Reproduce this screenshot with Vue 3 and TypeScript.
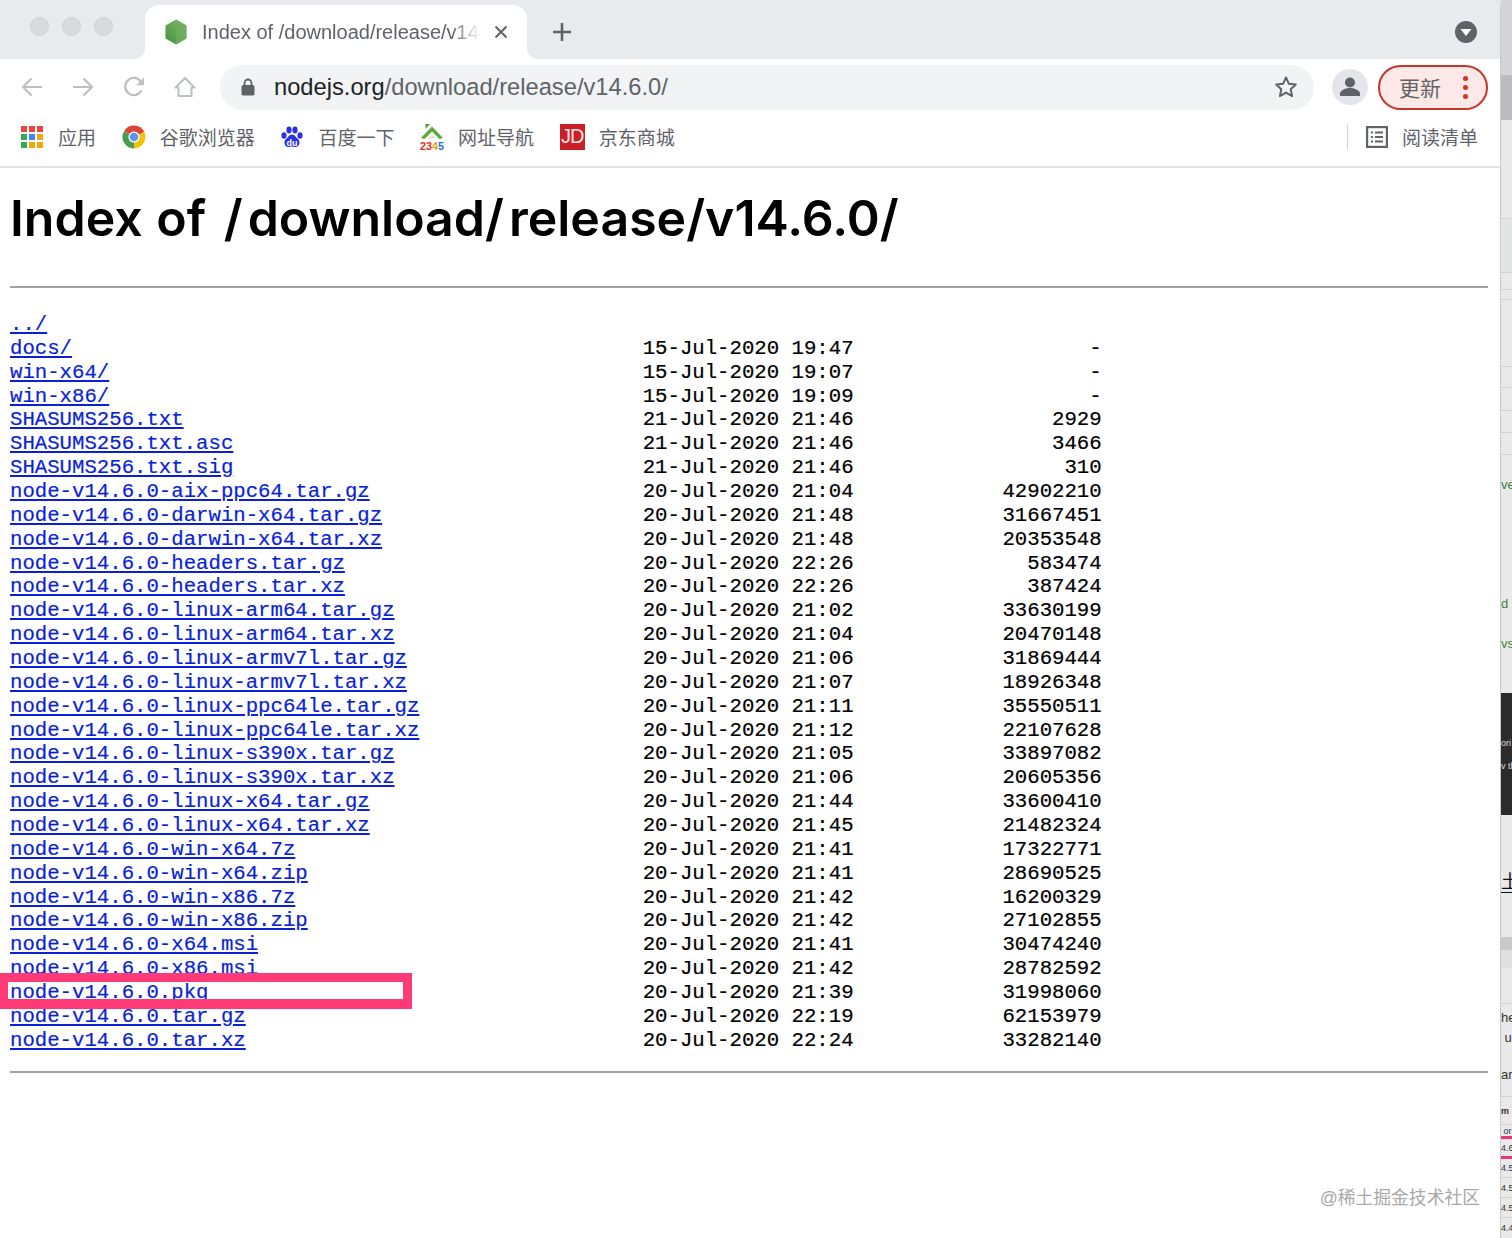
<script setup lang="ts">
type Entry = { name: string; date?: string; size?: string }

const entries: Entry[] = [
  { name: '../' },
  { name: 'docs/', date: '15-Jul-2020 19:47', size: '-' },
  { name: 'win-x64/', date: '15-Jul-2020 19:07', size: '-' },
  { name: 'win-x86/', date: '15-Jul-2020 19:09', size: '-' },
  { name: 'SHASUMS256.txt', date: '21-Jul-2020 21:46', size: '2929' },
  { name: 'SHASUMS256.txt.asc', date: '21-Jul-2020 21:46', size: '3466' },
  { name: 'SHASUMS256.txt.sig', date: '21-Jul-2020 21:46', size: '310' },
  { name: 'node-v14.6.0-aix-ppc64.tar.gz', date: '20-Jul-2020 21:04', size: '42902210' },
  { name: 'node-v14.6.0-darwin-x64.tar.gz', date: '20-Jul-2020 21:48', size: '31667451' },
  { name: 'node-v14.6.0-darwin-x64.tar.xz', date: '20-Jul-2020 21:48', size: '20353548' },
  { name: 'node-v14.6.0-headers.tar.gz', date: '20-Jul-2020 22:26', size: '583474' },
  { name: 'node-v14.6.0-headers.tar.xz', date: '20-Jul-2020 22:26', size: '387424' },
  { name: 'node-v14.6.0-linux-arm64.tar.gz', date: '20-Jul-2020 21:02', size: '33630199' },
  { name: 'node-v14.6.0-linux-arm64.tar.xz', date: '20-Jul-2020 21:04', size: '20470148' },
  { name: 'node-v14.6.0-linux-armv7l.tar.gz', date: '20-Jul-2020 21:06', size: '31869444' },
  { name: 'node-v14.6.0-linux-armv7l.tar.xz', date: '20-Jul-2020 21:07', size: '18926348' },
  { name: 'node-v14.6.0-linux-ppc64le.tar.gz', date: '20-Jul-2020 21:11', size: '35550511' },
  { name: 'node-v14.6.0-linux-ppc64le.tar.xz', date: '20-Jul-2020 21:12', size: '22107628' },
  { name: 'node-v14.6.0-linux-s390x.tar.gz', date: '20-Jul-2020 21:05', size: '33897082' },
  { name: 'node-v14.6.0-linux-s390x.tar.xz', date: '20-Jul-2020 21:06', size: '20605356' },
  { name: 'node-v14.6.0-linux-x64.tar.gz', date: '20-Jul-2020 21:44', size: '33600410' },
  { name: 'node-v14.6.0-linux-x64.tar.xz', date: '20-Jul-2020 21:45', size: '21482324' },
  { name: 'node-v14.6.0-win-x64.7z', date: '20-Jul-2020 21:41', size: '17322771' },
  { name: 'node-v14.6.0-win-x64.zip', date: '20-Jul-2020 21:41', size: '28690525' },
  { name: 'node-v14.6.0-win-x86.7z', date: '20-Jul-2020 21:42', size: '16200329' },
  { name: 'node-v14.6.0-win-x86.zip', date: '20-Jul-2020 21:42', size: '27102855' },
  { name: 'node-v14.6.0-x64.msi', date: '20-Jul-2020 21:41', size: '30474240' },
  { name: 'node-v14.6.0-x86.msi', date: '20-Jul-2020 21:42', size: '28782592' },
  { name: 'node-v14.6.0.pkg', date: '20-Jul-2020 21:39', size: '31998060' },
  { name: 'node-v14.6.0.tar.gz', date: '20-Jul-2020 22:19', size: '62153979' },
  { name: 'node-v14.6.0.tar.xz', date: '20-Jul-2020 22:24', size: '33282140' },
]

// nginx autoindex columns: name padded to 51, date, size right aligned in 20
const rest = (e: Entry) =>
  e.date ? ' '.repeat(51 - e.name.length) + e.date + (e.size ?? '').padStart(20) : ''

// slice of the window behind this one, top to bottom
const strip: { h: number; cls: string; text?: string }[] = [
  { h: 75, cls: 's-chrome' },
  { h: 45, cls: 's-chrome2' },
  { h: 99, cls: 's-plain s-line' },
  { h: 54, cls: 's-plain s-shade s-line' },
  { h: 17, cls: 's-plain s-line' },
  { h: 10, cls: 's-plain s-line' },
  { h: 67, cls: 's-plain s-line' },
  { h: 21, cls: 's-plain s-line' },
  { h: 23, cls: 's-plain s-line' },
  { h: 22, cls: 's-plain s-line' },
  { h: 22, cls: 's-plain s-line' },
  { h: 16, cls: 's-plain' },
  { h: 26, cls: 's-plain s-green', text: 've' },
  { h: 93, cls: 's-plain' },
  { h: 26, cls: 's-plain s-green', text: 'd p' },
  { h: 14, cls: 's-plain' },
  { h: 26, cls: 's-plain s-green', text: 'vs' },
  { h: 37, cls: 's-plain' },
  { h: 38, cls: 's-dark' },
  { h: 24, cls: 's-dark s-tiny', text: 'ori' },
  { h: 22, cls: 's-dark s-tiny', text: 'v th' },
  { h: 38, cls: 's-dark' },
  { h: 52, cls: 's-plain' },
  { h: 26, cls: 's-plain s-black', text: '土' },
  { h: 44, cls: 's-plain' },
  { h: 13, cls: 's-grey' },
  { h: 18, cls: 's-light' },
  { h: 36, cls: 's-plain s-line' },
  { h: 26, cls: 's-plain s-body', text: 'he' },
  { h: 14, cls: 's-plain s-body', text: ' u' },
  { h: 18, cls: 's-plain' },
  { h: 24, cls: 's-plain s-body', text: 'ar' },
  { h: 11, cls: 's-plain s-line' },
  { h: 28, cls: 's-plain s-tiny s-bold s-line', text: 'm' },
  { h: 11, cls: 's-plain s-tiny', text: ' or' },
  { h: 3, cls: 's-pink' },
  { h: 17, cls: 's-plain s-tiny', text: '4.6' },
  { h: 3, cls: 's-pink' },
  { h: 19, cls: 's-plain s-tiny s-line', text: '4.5' },
  { h: 20, cls: 's-plain s-tiny s-line', text: '4.5' },
  { h: 20, cls: 's-plain s-tiny s-line', text: '4.5' },
  { h: 20, cls: 's-plain s-tiny', text: '4.4' },
]
</script>

<template>
  <div class="screen">
    <div class="window">
      <div class="tabstrip">
        <div class="lights"><i></i><i></i><i></i></div>
        <div class="tab">
          <svg class="favicon" width="24" height="28" viewBox="0 0 24 28">
            <defs>
              <linearGradient id="nodeg" x1="0" y1="1" x2="1" y2="0">
                <stop offset="0" stop-color="#3f8f3c" />
                <stop offset="1" stop-color="#86bd6c" />
              </linearGradient>
            </defs>
            <path d="M12 1.500 22.500 7.600v12.800L12 26.500 1.500 20.400V7.600z" fill="url(#nodeg)" />
            <path d="M12 1.500 22.500 7.600v12.800L12 26.500z" fill="#6fae5c" opacity=".6" />
          </svg>
          <span class="tab-title">Index of /download/release/v14.6.0/</span>
          <svg class="tab-close" width="14" height="14" viewBox="0 0 14 14">
            <path d="M1.500 1.500l11 11M12.500 1.500l-11 11" stroke="#5f6368" stroke-width="2" fill="none" />
          </svg>
        </div>
        <svg class="new-tab" width="20" height="20" viewBox="0 0 20 20">
          <path d="M10 1v18M1 10h18" stroke="#5f6368" stroke-width="2.600" fill="none" />
        </svg>
        <svg class="tab-search" width="22" height="22" viewBox="0 0 22 22">
          <circle cx="11" cy="11" r="11" fill="#5f6368" />
          <path d="M5.500 8h11L11 15z" fill="#fff" />
        </svg>
      </div>

      <div class="toolbar">
        <div class="nav">
          <svg width="24" height="24" viewBox="0 0 24 24">
            <path d="M22 12H3M11.500 3.500 3 12l8.500 8.500" stroke="#bdbfc2" stroke-width="2.200" fill="none" />
          </svg>
          <svg width="24" height="24" viewBox="0 0 24 24">
            <path d="M2 12h19M12.500 3.500 21 12l-8.500 8.500" stroke="#bdbfc2" stroke-width="2.200" fill="none" />
          </svg>
          <svg width="24" height="24" viewBox="0 0 24 24">
            <path d="M19.500 15.500A8.600 8.600 0 1 1 18.600 6.200" stroke="#bdbfc2" stroke-width="2.200" fill="none" />
            <path d="M22 2.500v7.800h-7.800z" fill="#bdbfc2" />
          </svg>
          <svg width="24" height="24" viewBox="0 0 24 24">
            <path d="M12 3 2.500 12.500h3V21h13v-8.500h3z" stroke="#bdbfc2" stroke-width="2" fill="none" stroke-linejoin="round" />
          </svg>
        </div>
        <div class="omnibox">
          <svg class="lock" width="14" height="18" viewBox="0 0 14 18">
            <path d="M3.500 8V5a3.500 3.500 0 0 1 7 0v3" stroke="#5f6368" stroke-width="1.800" fill="none" />
            <rect x="0.500" y="7" width="13" height="10.500" rx="1.800" fill="#5f6368" />
          </svg>
          <span class="url"><b>nodejs.org</b>/download/release/v14.6.0/</span>
          <svg class="star" width="24" height="24" viewBox="0 0 24 24">
            <path d="M12 2.500l2.900 6.300 6.900.8-5.100 4.700 1.400 6.800-6.100-3.400-6.100 3.400 1.400-6.800-5.100-4.700 6.900-.8z" stroke="#5f6368" stroke-width="2" fill="none" stroke-linejoin="round" />
          </svg>
        </div>
        <div class="avatar">
          <svg width="36" height="36" viewBox="0 0 36 36">
            <circle cx="18" cy="13.500" r="5" fill="#5f6368" />
            <path d="M8 27v-2.500c0-3.500 6.500-5.500 10-5.500s10 2 10 5.500V27z" fill="#5f6368" />
          </svg>
        </div>
        <div class="update">
          <span>更新</span>
          <div class="dots"><i></i><i></i><i></i></div>
        </div>
      </div>

      <div class="bookmarks">
        <div class="bm">
          <div class="apps">
            <i class="r"></i><i class="r"></i><i class="r"></i>
            <i class="g"></i><i class="b"></i><i class="y"></i>
            <i class="g"></i><i class="y"></i><i class="y"></i>
          </div>
          <span>应用</span>
        </div>
        <div class="bm">
          <svg width="24" height="24" viewBox="0 0 24 24">
            <path d="M12 12 2.200 6A11.500 11.500 0 0 1 22.300 7z" fill="#db4437" />
            <path d="M12 12 22.300 7A11.500 11.500 0 0 1 12 23.500z" fill="#f4c20d" />
            <path d="M12 12v11.500A11.500 11.500 0 0 1 2.200 6z" fill="#4a9d50" />
            <circle cx="12" cy="12" r="5.600" fill="#fff" />
            <circle cx="12" cy="12" r="4.300" fill="#5a95ea" />
          </svg>
          <span>谷歌浏览器</span>
        </div>
        <div class="bm">
          <svg width="24" height="24" viewBox="0 0 24 24">
            <g fill="#2932e1">
              <ellipse cx="4" cy="10.500" rx="2.600" ry="3.200" />
              <ellipse cx="9" cy="5" rx="2.600" ry="3.400" />
              <ellipse cx="15" cy="5" rx="2.600" ry="3.400" />
              <ellipse cx="20" cy="10.500" rx="2.600" ry="3.200" />
              <path d="M12 9.500c3 0 4 3 6 4.500 2.500 2 2 8-2.500 8-1.500 0-2.300-.6-3.500-.6s-2 .6-3.500.6C4 22 3.500 16 6 14c2-1.500 3-4.500 6-4.500z" />
            </g>
            <text x="12" y="20.500" class="du">du</text>
          </svg>
          <span>百度一下</span>
        </div>
        <div class="bm">
          <svg class="ic2345" width="24" height="28" viewBox="0 0 24 28">
            <path d="M1 15 12 3.500 23 15l-3.500 1L12 8.500 4.500 16z" fill="#5fa83c" />
            <path d="M5.500 1h4.500L5.500 6z" fill="#4f9a30" />
            <path d="M8 15.500 12 11.500l4 4z" fill="#d6ead0" />
            <text x="12" y="26.500" class="n2345" textLength="24" lengthAdjust="spacingAndGlyphs"><tspan fill="#d92d20">23</tspan><tspan fill="#e89a10">4</tspan><tspan fill="#1d74c9">5</tspan></text>
          </svg>
          <span>网址导航</span>
        </div>
        <div class="bm">
          <div class="jd">JD</div>
          <span>京东商城</span>
        </div>
        <div class="reading">
          <div class="sep"></div>
          <svg width="22" height="22" viewBox="0 0 22 22">
            <rect x="1.100" y="1.100" width="19.800" height="19.800" fill="none" stroke="#5f6368" stroke-width="2.200" />
            <path d="M5 6.500h2M9 6.500h8M5 11h2M9 11h8M5 15.500h2M9 15.500h8" stroke="#5f6368" stroke-width="2" fill="none" />
          </svg>
          <span>阅读清单</span>
        </div>
      </div>

      <div class="page">
        <h1>Index of <span class="slash-first">/</span>download<span class="slash-mid">/</span>release/v14.6.0/</h1>
        <hr />
        <div class="listing">
          <div v-for="e in entries" :key="e.name" class="row"><a href="#">{{ e.name }}</a>{{ rest(e) }}</div>
        </div>
        <hr />
      </div>

      <div class="highlight"></div>
      <div class="watermark">@稀土掘金技术社区</div>
    </div>

    <div class="behind">
      <div
        v-for="(s, i) in strip"
        :key="i"
        :class="['seg', s.cls]"
        :style="{ height: s.h + 'px' }"
      >{{ s.text }}</div>
    </div>
  </div>
</template>

<style scoped>
.screen {
  display: flex;
  width: 1512px;
  height: 1238px;
  overflow: hidden;
  background: #e9e9e9;
}

.window {
  position: relative;
  width: 1501px;
  flex-shrink: 0;
  background: #fff;
  border-right: 1px solid #c9c9cb;
  box-sizing: border-box;
  border-top-right-radius: 8px;
  overflow: hidden;
  font-family: "Liberation Sans", "Noto Sans CJK SC", sans-serif;
}

/* tab strip */
.tabstrip {
  display: flex;
  align-items: flex-end;
  height: 59px;
  background: #e8eaed;
  position: relative;
}

.lights {
  display: flex;
  gap: 13px;
  align-self: flex-start;
  margin: 17px 0 0 30px;
}

.lights i {
  display: block;
  width: 19px;
  height: 19px;
  border-radius: 50%;
  background: #d9dadc;
  border: 1px solid #cfd0d2;
  box-sizing: border-box;
}

.tab {
  position: relative;
  display: flex;
  align-items: center;
  width: 382px;
  height: 54px;
  margin-left: 32px;
  padding-left: 19px;
  box-sizing: border-box;
  background: #fff;
  border-radius: 14px 14px 0 0;
}

.tab::before,
.tab::after {
  content: "";
  position: absolute;
  bottom: 0;
  width: 12px;
  height: 12px;
}

.tab::before {
  left: -12px;
  background: radial-gradient(circle at 0 0, #e8eaed 12px, #fff 12.500px);
}

.tab::after {
  right: -12px;
  background: radial-gradient(circle at 100% 0, #e8eaed 12px, #fff 12.500px);
}

.favicon {
  flex-shrink: 0;
}

.tab-title {
  margin-left: 14px;
  width: 278px;
  overflow: hidden;
  white-space: nowrap;
  font-size: 20px;
  color: #5f6368;
  -webkit-mask-image: linear-gradient(to right, #000 250px, transparent 278px);
  mask-image: linear-gradient(to right, #000 250px, transparent 278px);
}

.tab-close {
  margin-left: 14px;
}

.new-tab {
  margin: 0 0 17px 25px;
}

.tab-search {
  margin: 0 23px 16px auto;
}

/* toolbar */
.toolbar {
  display: flex;
  align-items: center;
  height: 56px;
}

.nav {
  display: flex;
  gap: 27px;
  width: 220px;
  padding-left: 20px;
  box-sizing: border-box;
}

.omnibox {
  display: flex;
  align-items: center;
  width: 1094px;
  height: 45px;
  border-radius: 23px;
  background: #f1f3f4;
  box-sizing: border-box;
  padding: 0 16px 0 21px;
}

.url {
  margin-left: 19px;
  font-size: 23.700px;
  color: #5f6368;
  white-space: nowrap;
}

.url b {
  font-weight: 400;
  color: #202124;
}

.star {
  margin-left: auto;
}

.avatar {
  width: 36px;
  height: 36px;
  margin-left: 18px;
  border-radius: 50%;
  background: #e3e5ea;
}

.avatar svg {
  display: block;
}

.update {
  display: flex;
  align-items: center;
  width: 110px;
  height: 45px;
  margin-left: 10px;
  padding-left: 19px;
  box-sizing: border-box;
  border: 2px solid #c5372c;
  border-radius: 23px;
  background: #fce8e6;
  font-size: 21px;
  color: #5f6368;
}

.dots {
  display: flex;
  flex-direction: column;
  gap: 4px;
  margin-left: 22px;
}

.dots i {
  display: block;
  width: 5px;
  height: 5px;
  border-radius: 50%;
  background: #d93025;
}

/* bookmarks bar */
.bookmarks {
  display: flex;
  align-items: center;
  gap: 25.700px;
  height: 53px;
  padding: 0 22px 8px 20px;
  box-sizing: border-box;
  border-bottom: 2px solid #e2e2e3;
  font-size: 19px;
  color: #5f6368;
}

.bm {
  display: flex;
  align-items: center;
  gap: 14px;
}

.ic2345 {
  margin: -2px 0;
}

.apps {
  display: grid;
  grid-template-columns: repeat(3, 6px);
  grid-auto-rows: 6px;
  gap: 2px;
  width: 24px;
  padding-left: 1px;
  box-sizing: border-box;
}

.apps i {
  display: block;
}

.apps .r { background: #e8453c; }
.apps .g { background: #34a853; }
.apps .b { background: #4285f4; }
.apps .y { background: #f4a60d; }

.du {
  font-family: "Liberation Sans", sans-serif;
  font-size: 9px;
  font-weight: 700;
  fill: #fff;
  text-anchor: middle;
}

.n2345 {
  font-family: "Liberation Sans", sans-serif;
  font-size: 10px;
  font-weight: 700;
  text-anchor: middle;
}

.jd {
  display: flex;
  align-items: center;
  justify-content: center;
  width: 25px;
  height: 26px;
  background: #cb2027;
  color: #f6e4e4;
  font-size: 20px;
  letter-spacing: -1px;
}

.reading {
  display: flex;
  align-items: center;
  margin-left: auto;
}

.sep {
  width: 1px;
  height: 25px;
  background: #cfd1d4;
  margin-right: 18px;
}

.reading span {
  margin-left: 14px;
}

/* page */
.page {
  padding: 0 12px 0 10px;
}

h1 {
  margin: 0;
  padding-top: 20px;
  font-family: Inter, "Liberation Sans", sans-serif;
  font-size: 50px;
  line-height: 60px;
  font-weight: 600;
  color: #000;
  white-space: nowrap;
  word-spacing: 1px;
}

/* slashes sit wider in the original face */
.slash-first {
  margin: 0 5px 0 4px;
}

.slash-mid {
  margin-right: 5px;
}

hr {
  margin: 0;
  height: 2px;
  border: 0;
  background: #a3a3a3;
}

.page h1 + hr {
  margin-top: 38px;
}

.listing {
  padding: 25px 0 18px;
  font-family: "Liberation Mono", monospace;
  font-size: 20.680px;
  line-height: 23.860px;
  color: #000;
  -webkit-text-stroke: 0.2px;
}

.row {
  white-space: pre;
  height: 23.860px;
}

.row a {
  color: #0a1fd8;
}

/* markup on top of the screenshot */
.highlight {
  position: absolute;
  left: -2px;
  top: 973px;
  width: 414px;
  height: 36px;
  box-sizing: border-box;
  border: solid #ff3b77;
  border-width: 9px 9px 10px 10px;
}

.watermark {
  position: absolute;
  right: 20px;
  top: 1183px;
  font-size: 17.800px;
  color: #a8a8a8;
  white-space: nowrap;
}

/* window behind */
.behind {
  width: 11px;
  flex-shrink: 0;
  overflow: hidden;
  font-family: "Liberation Sans", sans-serif;
}

.seg {
  box-sizing: border-box;
  overflow: hidden;
  white-space: pre;
  font-size: 13px;
  display: flex;
  align-items: center;
}

.s-chrome { background: #d5d4d8; }
.s-chrome2 { background: #bcbbc0; }
.s-plain { background: #e9e9e9; color: #333; }
.s-shade { background: #e3e4e4; }
.s-line { border-bottom: 1px solid #d2d2d2; }
.s-green { color: #3e7d3a; }
.s-dark { background: #2b2b2b; color: #ddd; }
.s-tiny { font-size: 9px; }
.s-bold { font-weight: 700; }
.s-black { color: #111; font-size: 18px; font-family: "Noto Sans CJK SC", sans-serif; border-bottom: 1px solid #111; }
.s-grey { background: #c9c9c9; }
.s-light { background: #e0e0e0; }
.s-body { color: #333; font-size: 13px; }
.s-pink { background: #e8357a; }
</style>

<style>
html,
body {
  margin: 0;
  background: #fff;
}
</style>
